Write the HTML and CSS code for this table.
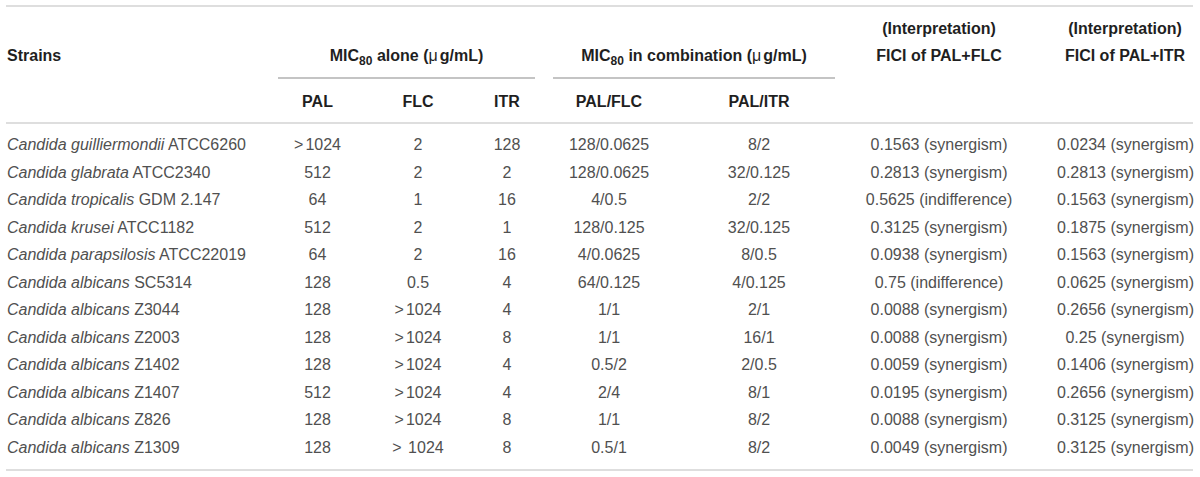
FILE: index.html
```html
<!DOCTYPE html>
<html lang="en">
<head>
<meta charset="utf-8">
<title>MIC80 and FICI table</title>
<link rel="stylesheet" href="styles.css">
</head>
<body>
<div class="page">
<table class="data">
  <colgroup>
    <col class="c-strain">
    <col class="c-pal">
    <col class="c-flc">
    <col class="c-itr">
    <col class="c-palflc">
    <col class="c-palitr">
    <col class="c-fici1">
    <col class="c-fici2">
  </colgroup>
  <thead>
    <tr class="h1">
      <th class="strain">Strains</th>
      <th class="group" colspan="3"><div class="group-label">MIC<sub>80</sub> alone (<span class="mu">μ</span>g/mL)</div></th>
      <th class="group" colspan="2"><div class="group-label">MIC<sub>80</sub> in combination (<span class="mu">μ</span>g/mL)</div></th>
      <th>(Interpretation)<br>FICI of PAL+FLC</th>
      <th class="last">(Interpretation)<br>FICI of PAL+ITR</th>
    </tr>
    <tr class="h2">
      <th class="strain"></th>
      <th>PAL</th>
      <th>FLC</th>
      <th>ITR</th>
      <th>PAL/FLC</th>
      <th>PAL/ITR</th>
      <th></th>
      <th class="last"></th>
    </tr>
  </thead>
  <tbody>
    <tr><td class="strain"><i>Candida guilliermondii</i> ATCC6260</td><td><span class="gt">&gt;</span>1024</td><td>2</td><td>128</td><td>128/0.0625</td><td>8/2</td><td>0.1563 (synergism)</td><td class="last">0.0234 (synergism)</td></tr>
    <tr><td class="strain"><i>Candida glabrata</i> ATCC2340</td><td>512</td><td>2</td><td>2</td><td>128/0.0625</td><td>32/0.125</td><td>0.2813 (synergism)</td><td class="last">0.2813 (synergism)</td></tr>
    <tr><td class="strain"><i>Candida tropicalis</i> GDM 2.147</td><td>64</td><td>1</td><td>16</td><td>4/0.5</td><td>2/2</td><td>0.5625 (indifference)</td><td class="last">0.1563 (synergism)</td></tr>
    <tr><td class="strain"><i>Candida krusei</i> ATCC1182</td><td>512</td><td>2</td><td>1</td><td>128/0.125</td><td>32/0.125</td><td>0.3125 (synergism)</td><td class="last">0.1875 (synergism)</td></tr>
    <tr><td class="strain"><i>Candida parapsilosis</i> ATCC22019</td><td>64</td><td>2</td><td>16</td><td>4/0.0625</td><td>8/0.5</td><td>0.0938 (synergism)</td><td class="last">0.1563 (synergism)</td></tr>
    <tr><td class="strain"><i>Candida albicans</i> SC5314</td><td>128</td><td>0.5</td><td>4</td><td>64/0.125</td><td>4/0.125</td><td>0.75 (indifference)</td><td class="last">0.0625 (synergism)</td></tr>
    <tr><td class="strain"><i>Candida albicans</i> Z3044</td><td>128</td><td><span class="gt">&gt;</span>1024</td><td>4</td><td>1/1</td><td>2/1</td><td>0.0088 (synergism)</td><td class="last">0.2656 (synergism)</td></tr>
    <tr><td class="strain"><i>Candida albicans</i> Z2003</td><td>128</td><td><span class="gt">&gt;</span>1024</td><td>8</td><td>1/1</td><td>16/1</td><td>0.0088 (synergism)</td><td class="last">0.25 (synergism)</td></tr>
    <tr><td class="strain"><i>Candida albicans</i> Z1402</td><td>128</td><td><span class="gt">&gt;</span>1024</td><td>4</td><td>0.5/2</td><td>2/0.5</td><td>0.0059 (synergism)</td><td class="last">0.1406 (synergism)</td></tr>
    <tr><td class="strain"><i>Candida albicans</i> Z1407</td><td>512</td><td><span class="gt">&gt;</span>1024</td><td>4</td><td>2/4</td><td>8/1</td><td>0.0195 (synergism)</td><td class="last">0.2656 (synergism)</td></tr>
    <tr><td class="strain"><i>Candida albicans</i> Z826</td><td>128</td><td><span class="gt">&gt;</span>1024</td><td>8</td><td>1/1</td><td>8/2</td><td>0.0088 (synergism)</td><td class="last">0.3125 (synergism)</td></tr>
    <tr><td class="strain"><i>Candida albicans</i> Z1309</td><td>128</td><td><span class="gt">&gt;</span> 1024</td><td>8</td><td>0.5/1</td><td>8/2</td><td>0.0049 (synergism)</td><td class="last">0.3125 (synergism)</td></tr>
  </tbody>
</table>
</div>
</body>
</html>
```
FILE: styles.css
```css
html, body {
  margin: 0;
  padding: 0;
  background: #ffffff;
}

.page {
  padding: 5px 7px 0 6px;
  font-family: "Liberation Sans", Arial, sans-serif;
  font-size: 16px;
}

.data {
  width: 1187px;
  table-layout: fixed;
  border-collapse: separate;
  border-spacing: 0;
}

.c-strain { width: 263px; }
.c-pal { width: 97px; }
.c-flc { width: 104px; }
.c-itr { width: 74px; }
.c-palflc { width: 130px; }
.c-palitr { width: 170px; }
.c-fici1 { width: 190px; }
.c-fici2 { width: 159px; }

.data th,
.data td {
  padding: 0;
  text-align: center;
  white-space: nowrap;
}

.data th {
  font-weight: bold;
  color: #1f1f1f;
}

.data td {
  color: #505050;
  line-height: 27.5px;
}

.data .strain {
  text-align: left;
  padding-left: 1px;
}

.data .last {
  padding-left: 23px;
}

.h1 {
  height: 74px;
}

.h1 th {
  border-top: 2px solid #dedede;
  vertical-align: bottom;
  line-height: 27px;
  padding-bottom: 10px;
}

.h1 th.group {
  padding: 0 9px;
}

.group-label {
  border-bottom: 2px solid #c4c4c4;
  padding-bottom: 8px;
}

.h1 sub {
  font-size: 12px;
  line-height: 0;
  vertical-align: -4px;
}

.mu {
  font-weight: normal;
  margin-right: 2px;
}

.h2 th {
  height: 45px;
  padding-top: 3px;
  box-sizing: border-box;
  vertical-align: middle;
  border-bottom: 2px solid #dedede;
}

.data tbody tr:first-child td {
  padding-top: 7px;
}

.data tbody tr:last-child td {
  padding-bottom: 8px;
  border-bottom: 2px solid #dedede;
}

.gt {
  margin-right: 2px;
}
```
